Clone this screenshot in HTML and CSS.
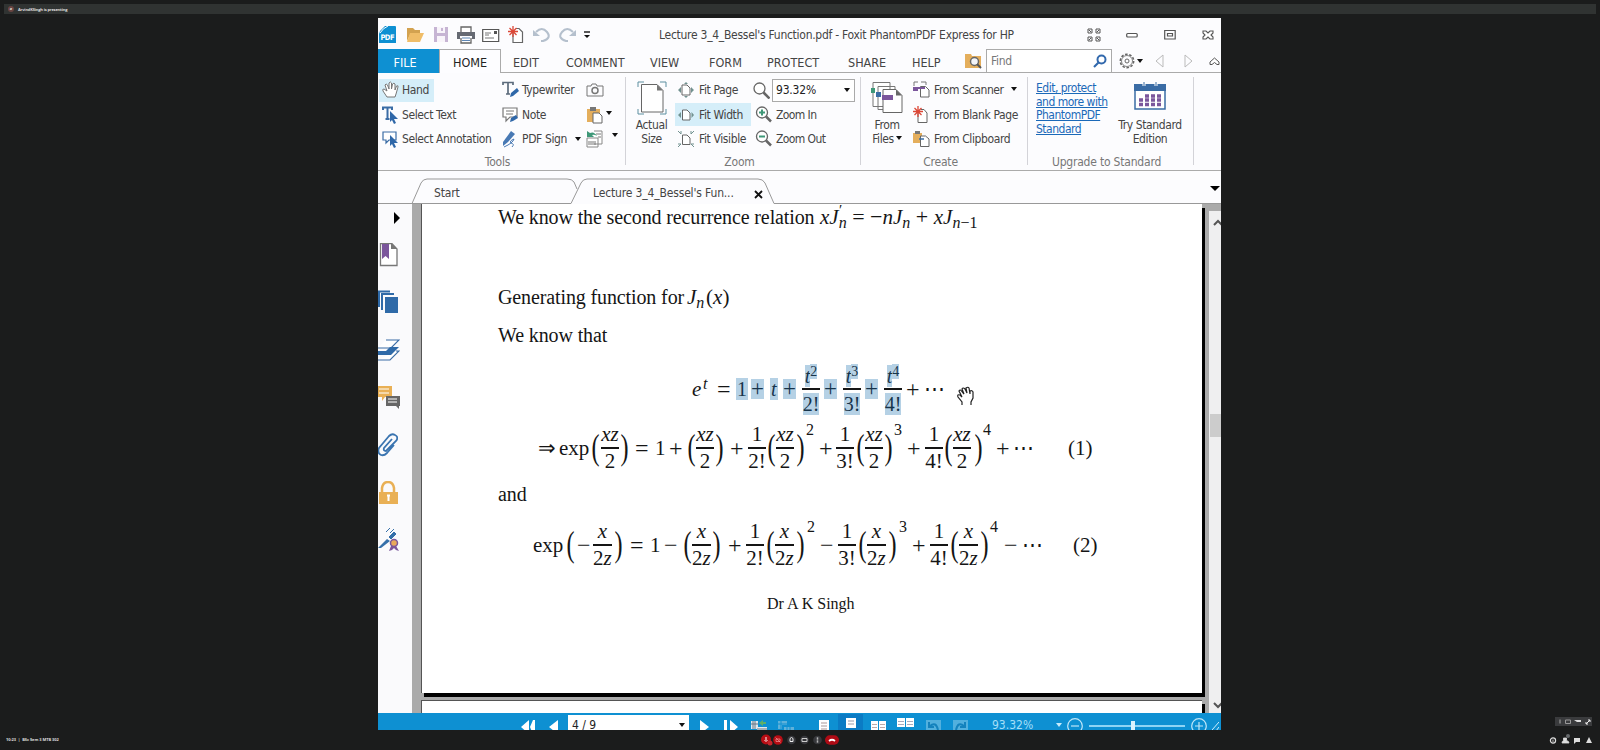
FILE: index.html
```html
<!DOCTYPE html>
<html lang="en">
<head>
<meta charset="utf-8">
<title>Lecture 3_4_Bessel's Function.pdf</title>
<link rel="stylesheet" href="styles.css">
</head>
<body>
<div class="call">
<header class="presenting"><i class="avatar">a</i><span>ArvindKSingh is presenting</span></header>

<main class="window">
  <div class="titlebar">
    <svg width="18" height="18" viewBox="0 0 18 18"><path d="M1 5 6 0h10q1 0 1 1v16H0V8z" fill="#0e90d2"/><path d="M1 7q3-5 8-7" stroke="#fff" fill="none"/><text x="1.5" y="14" font-size="7.5" font-weight="bold" fill="#fff" textLength="14">PDF</text></svg>
    <svg width="18" height="18" viewBox="0 0 18 18"><path d="M1 2h6l2 2h5v3H5L1 15z" fill="#d3a250"/><path d="M4 7h14l-4 9H1z" fill="#f0bd68"/></svg>
    <svg width="18" height="18" viewBox="0 0 18 18"><path d="M1 1h14v15H1z" fill="#c6b4d3"/><path d="M4 1h8v6H4zM4 10h8v6H4z" fill="#f8f4fa"/><path d="M9 2v3" stroke="#c6b4d3" stroke-width="2"/></svg>
    <svg width="18" height="18" viewBox="0 0 18 18"><path d="M4 6V1h10v5M4 12v5h10v-5" fill="#fff" stroke="#666" stroke-width="1.3"/><path d="M0 6h18v7h-3v-3H3v3H0z" fill="#666a73"/><path d="M5 12h8M5 14.500h8" stroke="#5d86b5"/></svg>
    <svg width="18" height="18" viewBox="0 0 18 18"><path d="M.7 3.500h16v12H.7z" fill="#fff" stroke="#555" stroke-width="1.2"/><path d="M3 7h6M3 9h4M3 12h9" stroke="#777"/><path d="M12 5h3v3h-3z" fill="#555"/></svg>
    <svg width="18" height="18" viewBox="0 0 18 18"><path d="M5 5v11.500h9.500V6L11 2.500H8" fill="#fff" stroke="#666" stroke-width="1.2"/><path d="M5 0v11M0 5.500h10M1.500 2l7 7M8.500 2l-7 7" stroke="#dc4837" stroke-width="1.3"/></svg>
    <svg width="18" height="18" viewBox="0 0 18 18"><path d="M3 6q6-6 11 0t-4 9H8" stroke="#b5c0cd" stroke-width="2" fill="none"/><path d="M0 4v6h7z" fill="#b5c0cd"/></svg>
    <svg width="18" height="18" viewBox="0 0 18 18"><path d="M14 6Q8 0 3 6t4 9h2" stroke="#b5c0cd" stroke-width="2" fill="none"/><path d="M17 4v6h-7z" fill="#b5c0cd"/></svg>
    <svg width="8" height="8" viewBox="0 0 8 8"><path d="M1 1h6" stroke="#222" stroke-width="1.500"/><path d="M1 4h6L4 7z" fill="#111"/></svg>
    <span class="title">Lecture 3_4_Bessel's Function.pdf - Foxit PhantomPDF Express for HP</span>
    <svg width="14" height="14" viewBox="0 0 14 14" fill="none" stroke="#555"><path d="M1 1h4v4H1zM9 1h4v4H9zM1 9h4v4H1zM9 9h4v4H9zM2 2l2 2M12 2l-2 2M2 12l2-2M12 12l-2-2"/></svg>
    <svg width="12" height="14" viewBox="0 0 12 14"><rect x=".7" y="5.500" width="10.500" height="3.500" rx="1" fill="#fff" stroke="#555" stroke-width="1.2"/></svg>
    <svg width="12" height="14" viewBox="0 0 12 14" fill="none" stroke="#555" stroke-width="1.2"><path d="M.7 2.500h10.500v8.500H.7zM3.500 5.500h5v2.500h-5z"/></svg>
    <svg width="12" height="14" viewBox="0 0 12 14"><path d="M1 3h3l2 2 2-2h3v2L9 7l2 2v2H8L6 9l-2 2H1V9l2-2-2-2z" fill="#fff" stroke="#555" stroke-width="1.1"/></svg>
  </div>

  <nav class="tabs">
    <span class="file">FILE</span><span class="home">HOME</span><span>EDIT</span><span>COMMENT</span><span>VIEW</span><span>FORM</span><span>PROTECT</span><span>SHARE</span><span>HELP</span>
    <svg width="18" height="18" viewBox="0 0 18 18"><path d="M0 2h6l1 2h9v12H0z" fill="#e4ae5c"/><circle cx="9.500" cy="9.500" r="4" fill="#f3f4f8" stroke="#666" stroke-width="1.500"/><path d="m12 12 4 4" stroke="#555" stroke-width="2"/></svg>
    <div class="find"><span>Find</span><svg width="14" height="14" viewBox="0 0 14 14"><circle cx="8.500" cy="5.500" r="4" fill="none" stroke="#3269ad" stroke-width="2"/><path d="m6 8-5 5" stroke="#3269ad" stroke-width="2.200"/></svg></div>
    <svg width="16" height="16" viewBox="0 0 16 16" fill="none" stroke="#666"><circle cx="8" cy="8" r="6.700" stroke-width="1.500" stroke-dasharray="2.600 1.600"/><circle cx="8" cy="8" r="5.500" stroke-width=".8"/><circle cx="8" cy="8" r="2"/></svg>
    <i class="arrow"></i>
    <svg width="9" height="14" viewBox="0 0 9 14"><path d="M8 1v12L1 7z" fill="none" stroke="#bbb"/></svg>
    <svg width="9" height="14" viewBox="0 0 9 14"><path d="M1 1v12l7-6z" fill="none" stroke="#bbb"/></svg>
    <svg width="11" height="10" viewBox="0 0 11 10"><path d="m1 6 4.500-4L10 6v2.500H8L5.500 6.500 3 8.500H1z" fill="#fff" stroke="#555"/></svg>
  </nav>

  <section class="ribbon">
    <div class="group tools">
      <div class="items">
        <div class="cmd on"><svg width="18" height="18" viewBox="0 0 18 18"><path d="M5 16 1 10q-1-2 1-2l3 2L3 4q1-2 2.500 0L7 8V2q1.500-2 2.500 0v6l1-5q1.500-1.500 2.500 0v6l1.500-4q2-1 1.500 1l-2 7-1 3z" fill="#fff" stroke="#777"/></svg>Hand</div>
        <div class="cmd"><svg width="18" height="18" viewBox="0 0 18 18"><path d="M1 4V1.500h10V4M6 1v12M4 13h4" fill="none" stroke="#5c6b7c" stroke-width="1.700"/><path d="m8 16 1-4 6-5 2 3-6 5z" fill="#2f67a8"/></svg>Typewriter</div>
        <div class="cmd"><svg width="18" height="18" viewBox="0 0 18 18" fill="none" stroke="#777"><path d="M1 5h4l1-2h4l1 2h6v10H1z"/><circle cx="9" cy="9.500" r="3" stroke-width="1.500"/></svg></div>
        <div class="cmd"><svg width="18" height="18" viewBox="0 0 18 18"><path d="M1 4V1.500h9V4M5.500 1v12M3.500 13h4" fill="none" stroke="#3a6ca5" stroke-width="2"/><path d="m8 5 8 8h-4l2 4-2 1-2-4-2 2z" fill="#2f67a8"/></svg>Select Text</div>
        <div class="cmd"><svg width="18" height="18" viewBox="0 0 18 18"><path d="M1 2h14v9H8l-4 4v-4H1z" fill="#fff" stroke="#777" stroke-width="1.200"/><path d="M4 5h8M4 8h7" stroke="#777"/><path d="m8 16 1-4 5-3 2 3-5 3z" fill="#2f67a8"/></svg>Note</div>
        <div class="cmd"><svg width="18" height="18" viewBox="0 0 18 18"><path d="M1 3h13v13H1z" fill="#e4ae5c"/><path d="M4 1h6v4H4z" fill="#777"/><path d="M7 7h6l3 3v7H7z" fill="#fff" stroke="#666"/></svg><i class="arrow"></i></div>
        <div class="cmd"><svg width="18" height="18" viewBox="0 0 18 18"><path d="M1 2h13v8H7l-3 3v-3H1z" fill="#fff" stroke="#3a6ca5" stroke-width="1.200"/><path d="m8 5 8 8h-4l2 4-2 1-2-4-2 2z" fill="#2f67a8"/></svg>Select Annotation</div>
        <div class="cmd"><svg width="18" height="18" viewBox="0 0 18 18"><path d="m1 12 8-11 4 3-7 8-5 4z" fill="#4879b4"/><path d="M2 17q9-4 10-8-5 2-3 4 4 1 1 4" fill="none" stroke="#4879b4"/></svg>PDF Sign<i class="arrow"></i></div>
        <div class="cmd"><svg width="18" height="18" viewBox="0 0 18 18"><path d="M8 1h8v13H8M1 8h11v9H1z" fill="#fff" stroke="#888"/><path d="M10 4h5M12 7h3M3 15v-4M5 15v-4M7 15v-4M9 15v-4" stroke="#777"/><path d="M1 1v6h7L6 5q2-1 5 1Q8 1 4 3z" fill="#3f9878"/></svg><i class="arrow far"></i></div>
      </div>
      <div class="label">Tools</div>
    </div>
    <div class="group zoomer">
      <div class="big"><svg width="30" height="34" viewBox="0 0 30 34"><path d="M1 6V1h6M23 1h6v5M1 28v5h6M23 33h6v-5" fill="none" stroke="#5d8fa0"/><path d="M4.500 3.500H20l6 6V31H4.500z" fill="#fff" stroke="#666"/><path d="M20 3.500v6h6z" fill="#777"/></svg><span>Actual<br>Size</span></div>
      <div class="items">
        <div class="cmd"><svg width="16" height="16" viewBox="0 0 16 16"><path d="M4 3h5l3 3v7H4z" fill="#fff" stroke="#666"/><path d="M3 5 0 8l3 3zM13 5l3 3-3 3zM6 2l2-2 2 2zM6 14l2 2 2-2z" fill="#71918f"/></svg>Fit Page</div>
        <div class="cmd"><svg width="17" height="17" viewBox="0 0 17 17"><circle cx="6.500" cy="6.500" r="5.500" fill="#fff" stroke="#666" stroke-width="1.300"/><path d="m10.500 10.500 6 6" stroke="#666" stroke-width="2.500"/></svg><div class="select">93.32%<i class="arrow"></i></div></div>
        <div class="cmd on"><svg width="16" height="16" viewBox="0 0 16 16"><path d="M4.500 3H9l3 3v7H4.500z" fill="#fff" stroke="#666"/><path d="M3 5 0 8l3 3zM13.500 5l2.500 3-2.500 3z" fill="#71918f"/></svg>Fit Width</div>
        <div class="cmd"><svg width="17" height="17" viewBox="0 0 17 17"><circle cx="7" cy="6.500" r="5.500" fill="#fff" stroke="#666" stroke-width="1.300"/><path d="m11 10.500 5 5" stroke="#666" stroke-width="2.500"/><path d="M4 6.500h6M7 3.500v6" stroke="#3f9878" stroke-width="2"/></svg>Zoom In</div>
        <div class="cmd"><svg width="16" height="16" viewBox="0 0 16 16"><path d="M4.500 4H9l3 3v6.500H4.500z" fill="#fff" stroke="#666"/><path d="m0 0 3 3V0M16 0l-3 3V0M0 16l3-3H0M16 16l-3-3h3" fill="none" stroke="#71918f"/></svg>Fit Visible</div>
        <div class="cmd"><svg width="17" height="17" viewBox="0 0 17 17"><circle cx="7" cy="6.500" r="5.500" fill="#fff" stroke="#666" stroke-width="1.300"/><path d="m11 10.500 5 5" stroke="#666" stroke-width="2.500"/><path d="M4 6.500h6" stroke="#3f9878" stroke-width="2"/></svg>Zoom Out</div>
      </div>
      <div class="label">Zoom</div>
    </div>
    <div class="group create">
      <div class="big"><svg width="32" height="34" viewBox="0 0 32 34"><path d="M2 1.500h17v24H2zM7 5.500h17v23H7z" fill="#fff" stroke="#777"/><path d="M12 8.500h13l6 6v17H12z" fill="#fff" stroke="#666"/><path d="M25 8.500v6h6z" fill="#666"/><path d="M0 7h4v5H0z" fill="#3f9878"/><path d="M5 11h5v5H5z" fill="#3a6ca5"/><path d="M11 14h11v5H11z" fill="#7b569c"/></svg><span>From<br>Files<i class="arrow"></i></span></div>
      <div class="items">
        <div class="cmd"><svg width="17" height="18" viewBox="0 0 17 18"><path d="M7.500 5.500h5l3.500 3.500v7H7.500z" fill="#fff" stroke="#666"/><path d="M1 5V1h4M8 1h5v3" fill="none" stroke="#777"/><path d="M0 7h12M0 9h5" stroke="#7b569c" stroke-width="2"/></svg>From Scanner<i class="arrow"></i></div>
        <div class="cmd"><svg width="17" height="18" viewBox="0 0 17 18"><path d="M5 5v11.500h9V7l-3-3.500H8" fill="#fff" stroke="#666"/><path d="M5 0v11M0 5.500h10M1.500 2l7 7M8.500 2l-7 7" stroke="#dc4837" stroke-width="1.300"/></svg>From Blank Page</div>
        <div class="cmd"><svg width="17" height="18" viewBox="0 0 17 18"><path d="M0 3h9v10H0z" fill="#e4ae5c"/><path d="M2 1h5v3H2z" fill="#777"/><path d="M7.500 6h5l3.500 3v7.500H7.500z" fill="#fff" stroke="#666"/><path d="M6 9h5" stroke="#3a6ca5" stroke-width="1.500"/></svg>From Clipboard</div>
      </div>
      <div class="label">Create</div>
    </div>
    <div class="group upgrade">
      <a class="offer">Edit, protect<br>and more with<br>PhantomPDF<br>Standard</a>
      <div class="big"><svg width="32" height="34" viewBox="0 0 32 34"><path d="M1 4h30v24H1z" fill="#fff" stroke="#3a6ca5" stroke-width="1.500"/><path d="M0 3h32v7H0z" fill="#3a6ca5"/><path d="M10 0v5M22 0v5" stroke="#fff" stroke-width="3"/><path d="M10 1v4M22 1v4" stroke="#3a6ca5"/><path d="M11 15h17M5 19h23M5 23.500h23" stroke="#7b569c" stroke-width="3.500" stroke-dasharray="4 2"/></svg><span>Try Standard<br>Edition</span></div>
      <div class="label">Upgrade to Standard</div>
    </div>
  </section>

  <div class="doctabs">
    <svg class="outline" width="843" height="33" viewBox="0 0 843 33"><path d="M0 32.500h34L43 12q2-4 6-4h140q5 0 7 3l3 7M34 32.500h159L203 12q2-4 6-4h171q5 0 7 4l9 20.500h447" fill="none" stroke="#999"/></svg>
    <span class="t1">Start</span><span class="t2">Lecture 3_4_Bessel's Fun...</span>
    <svg class="close" width="9" height="9" viewBox="0 0 9 9"><path d="m1 1 7 7M8 1 1 8" stroke="#111" stroke-width="1.800"/></svg>
    <svg class="more" width="10" height="6" viewBox="0 0 10 6"><path d="M0 0h10L5 5z"/></svg>
  </div>

  <div class="body">
    <aside>
      <svg width="7" height="12" viewBox="0 0 7 12"><path d="M1 0v12l6-6z"/></svg>
      <svg width="20" height="24" viewBox="0 0 20 24"><path d="M2.500.700H14L19 6v16.500H2.500z" fill="#fff" stroke="#777" stroke-width="1.300"/><path d="M13 0v6h6z" fill="#777"/><path d="M4 1h7v15l-3.500-3L4 16z" fill="#7b569c"/></svg>
      <svg width="20" height="24" viewBox="0 0 20 24"><path d="M1 17V1.500h11M4 20V4h12" fill="none" stroke="#2f6aa8" stroke-width="2"/><path d="M7 7h13v16H7z" fill="#2f6aa8"/></svg>
      <svg width="22" height="24" viewBox="0 0 22 24"><path d="M8 2h13l-8 8H0M0 22h12l9-9h-3" fill="#fff" stroke="#3a6ca5" stroke-width="1.200"/><path d="M0 13h8l4-4h9l-8 8H0z" fill="#2f6aa8"/></svg>
      <svg width="22" height="24" viewBox="0 0 22 24"><path d="M0 1h14v11H7l-3 4v-4H0z" fill="#e9b055"/><path d="M1 4h10M1 8h10" stroke="#fff"/><path d="M8 11h14v10h-1v3l-3-3H8z" fill="#666"/><path d="M10 14h9M10 17h9" stroke="#fff"/></svg>
      <svg width="20" height="24" viewBox="0 0 20 24"><path d="M14 6 6 15q-1 3 2 3l10-10q3-4-1-6-3-2-6 1L1 15q-2 5 2 7 3 1 6-2l7-8" fill="none" stroke="#3a74b0" stroke-width="1.800"/></svg>
      <svg width="20" height="24" viewBox="0 0 20 24"><path d="M4 12V7q1-6 6-6t6 6v5" fill="none" stroke="#e9b055" stroke-width="2.500"/><path d="M1 11h19v12H1z" fill="#e9b055"/><path d="M10.500 14v6M9 14.500h3" stroke="#fff" stroke-width="2"/></svg>
      <svg width="22" height="24" viewBox="0 0 22 24"><path d="m0 20 9-9 3 2-9 7z" fill="#3570aa"/><path d="m11 9 5-5 2 2-5 5zM8 4l4-4M12 5l4-4" fill="#3570aa" stroke="#3570aa"/><path d="m11 23 2-5h5l3 5-3-1-2-2-2 2z" fill="#7b569c"/><circle cx="16" cy="15" r="3.500" fill="#e9a95a" stroke="#7b569c" stroke-width="1.500"/></svg>
    </aside>
    <div class="viewer">
      <article class="page">
        <p class="recur">We know the second recurrence relation</p><p class="rel"><i>xJ</i><span class="prime">′</span><sub class="un"><i>n</i></sub><b> = −</b><i>nJ</i><sub><i>n</i></sub><b> + </b><i>xJ</i><sub><i>n</i>−1</sub></p>
        <p class="gen">Generating function for</p><p class="jn"><i>J</i><sub><i>n</i></sub>&#8202;(<i>x</i>)</p>
        <p class="know">We know that</p>
        <div class="eq e0"><i>e</i><i class="sup">t</i><b>=</b><span class="hl">1</span><b class="hl">+</b><i class="hl">t</i><b class="hl">+</b><span class="fr"><span><i class="hl">t</i><sup class="hl">2</sup></span><span><u class="hl">2!</u></span></span><b class="hl">+</b><span class="fr"><span><i class="hl">t</i><sup class="hl">3</sup></span><span><u class="hl">3!</u></span></span><b class="hl">+</b><span class="fr"><span><i class="hl">t</i><sup class="hl">4</sup></span><span><u class="hl">4!</u></span></span><b>+</b><span>⋯</span><svg width="18" height="20" viewBox="0 0 18 20"><path d="M5 19v-3L1 11q-1-3 2-2l2 2-3-6q1-2 2.500 0L7 8 5 3q1-2 3 0l2 4-1-5q2-1.500 3 0l1 6V5q2-1 3 1v6l-2 4v3" fill="#fff" stroke="#222" stroke-width="1.200"/></svg></div>
        <div class="eq e1"><span>⇒</span><span>exp</span><em>(</em><span class="fr"><i>xz</i><span>2</span></span><em>)</em><b>=</b><span>1</span><b>+</b><em>(</em><span class="fr"><i>xz</i><span>2</span></span><em>)</em><b>+</b><span class="fr"><span>1</span><span>2!</span></span><em>(</em><span class="fr"><i>xz</i><span>2</span></span><em>)</em><span class="sup">2</span><b>+</b><span class="fr"><span>1</span><span>3!</span></span><em>(</em><span class="fr"><i>xz</i><span>2</span></span><em>)</em><span class="sup">3</span><b>+</b><span class="fr"><span>1</span><span>4!</span></span><em>(</em><span class="fr"><i>xz</i><span>2</span></span><em>)</em><span class="sup">4</span><b>+</b><span>⋯</span><span>(1)</span></div>
        <p class="and">and</p>
        <div class="eq e2"><span>exp</span><em>(</em><b>−</b><span class="fr"><i>x</i><span>2<i>z</i></span></span><em>)</em><b>=</b><span>1</span><b>−</b><em>(</em><span class="fr"><i>x</i><span>2<i>z</i></span></span><em>)</em><b>+</b><span class="fr"><span>1</span><span>2!</span></span><em>(</em><span class="fr"><i>x</i><span>2<i>z</i></span></span><em>)</em><span class="sup">2</span><b>−</b><span class="fr"><span>1</span><span>3!</span></span><em>(</em><span class="fr"><i>x</i><span>2<i>z</i></span></span><em>)</em><span class="sup">3</span><b>+</b><span class="fr"><span>1</span><span>4!</span></span><em>(</em><span class="fr"><i>x</i><span>2<i>z</i></span></span><em>)</em><span class="sup">4</span><b>−</b><span>⋯</span><span>(2)</span></div>
        <p class="author">Dr A K Singh</p>
      </article>
      <div class="page next"></div>
    </div>
    <div class="scroll">
      <svg width="10" height="7" viewBox="0 0 10 7"><path d="m1 6 4-4 4 4" fill="none" stroke="#555" stroke-width="2"/></svg>
      <i class="thumb"></i>
      <svg width="10" height="7" viewBox="0 0 10 7"><path d="m1 1 4 4 4-4" fill="none" stroke="#555" stroke-width="2"/></svg>
    </div>
  </div>

  <footer class="status">
    <svg width="15" height="14" viewBox="0 0 15 14"><path d="M8 0v14L0 7zM12 0h2v14h-2l-3-7z" fill="#fff"/></svg>
    <svg width="9" height="14" viewBox="0 0 9 14"><path d="M9 0v14L0 7z" fill="#fff"/></svg>
    <div class="pageno">4 / 9<i class="arrow"></i></div>
    <svg width="9" height="14" viewBox="0 0 9 14"><path d="M0 0v14l9-7z" fill="#fff"/></svg>
    <svg width="15" height="14" viewBox="0 0 15 14"><path d="M6 0v14l8-7zM0 0h3v14H0z" fill="#fff"/></svg>
    <svg width="16" height="14" viewBox="0 0 16 14"><path d="M0 1h7v8H0zM6 7h10v7H6z" fill="#dfe9ee"/><path d="m8 3 4-3v2h3v2h-3v2z" fill="#5daf69"/><path d="M2 1v8M4 1v8M0 4h7M6 9h10" stroke="#678"/></svg>
    <svg width="16" height="14" viewBox="0 0 16 14"><path d="M0 1h9v4H4v4H0zM6 7h10v7H6z" fill="#5eb1da"/><path d="M3 1v8M0 4h9M9 7v7M12 7v7" stroke="#0e90d2"/></svg>
    <svg width="10" height="14" viewBox="0 0 10 14"><path d="M0 0h10v14H0z" fill="#fff"/><path d="M2 3h6M2 6h6M2 9h6" stroke="#a99"/></svg>
    <div class="active"><svg width="10" height="11" viewBox="0 0 10 11"><path d="M0 0h10v10H0z" fill="#fff"/><path d="M2 3h6M2 6h6" stroke="#99a"/></svg></div>
    <svg width="15" height="14" viewBox="0 0 15 14"><path d="M0 1h7v13H0zM8 1h7v13H8z" fill="#fff"/><path d="M1 4.500h5M1 7.500h5M9 4.500h5M9 7.500h5" stroke="#baa"/></svg>
    <svg class="up" width="17" height="11" viewBox="0 0 17 11"><path d="M0 1h8v9H0zM9 1h8v9H9z" fill="#fff"/><path d="M1 4.500h6M1 7.500h6M10 4.500h6M10 7.500h6" stroke="#aab"/></svg>
    <svg width="15" height="14" viewBox="0 0 15 14"><path d="M0 0h15v14H0z" fill="#52b0de"/><path d="M3 2v5h5M4 6q6-5 8 4" fill="none" stroke="#1482bd" stroke-width="2"/></svg>
    <svg width="15" height="14" viewBox="0 0 15 14"><path d="M0 0h15v14H0z" fill="#52b0de"/><path d="M12 2v5H7M11 6Q5 1 3 10" fill="none" stroke="#1482bd" stroke-width="2"/></svg>
    <span class="pct">93.32%</span>
    <i class="arrow lite"></i>
    <svg width="16" height="16" viewBox="0 0 16 16" fill="none" stroke="#bfe6f8" stroke-width="1.200"><circle cx="8" cy="8" r="7.300"/><path d="M4 8h8"/></svg>
    <div class="slider"><i></i></div>
    <svg width="16" height="16" viewBox="0 0 16 16" fill="none" stroke="#bfe6f8" stroke-width="1.200"><circle cx="8" cy="8" r="7.300"/><path d="M4 8h8M8 4v8"/></svg>
    <svg width="7" height="12" viewBox="0 0 7 12"><path d="m0 10 7-8M4 11l3-4" stroke="#cdeefc"/></svg>
  </footer>
</main>

<footer class="callbar">
  <span class="meeting">10:23 &nbsp;|&nbsp; BSc Sem 3 MTB 302</span>
  <div class="buttons">
    <svg width="14" height="12" viewBox="0 0 14 12"><circle cx="6" cy="5.500" r="5" fill="#b80d14"/><circle cx="10" cy="9" r="2.500" fill="#c4242a"/><path d="M6 3v3M4.500 6q1.500 3 3 0" stroke="#fff" fill="none"/></svg>
    <svg width="10" height="12" viewBox="0 0 10 12"><circle cx="5" cy="6" r="4.800" fill="#b80d14"/><path d="M3 5h4v2.500H3zM2.500 3.500l5 5" stroke="#e99" stroke-width=".7" fill="none"/></svg>
    <svg width="9" height="12" viewBox="0 0 9 12"><circle cx="4.500" cy="6" r="4.300" fill="#37383c"/><path d="M3 4.500v3h3v-3L4.500 3.500z" fill="none" stroke="#eee"/></svg>
    <svg width="9" height="12" viewBox="0 0 9 12"><circle cx="4.500" cy="6" r="4.300" fill="#37383c"/><path d="M2 4.500h5v3H2z" fill="none" stroke="#ccc"/></svg>
    <svg width="9" height="12" viewBox="0 0 9 12"><circle cx="4.500" cy="6" r="4.300" fill="#37383c"/><path d="M4.500 3.500v5" stroke="#ddd" stroke-dasharray="1.200 .7" stroke-width="1.500"/></svg>
    <svg width="14" height="12" viewBox="0 0 14 12"><rect y="1.300" width="14" height="9.400" rx="4.700" fill="#ae0b15"/><path d="M4 7q3-2.500 6 0" fill="none" stroke="#fff" stroke-width="1.700"/></svg>
  </div>
  <div class="side">
    <div class="tile"><svg width="37" height="9" viewBox="0 0 37 9"><path d="M5 2.500v4" stroke="#aaa"/><path d="M10.500 3h5v3.500h-5z" fill="none" stroke="#999"/><path d="M19 3h7v2h-4z" fill="#ddd"/><path d="m31 7 4-4M33 3h2v2M31 5v2h2" stroke="#eee" fill="none"/></svg></div>
    <svg width="44" height="12" viewBox="0 0 44 12"><circle cx="4" cy="6.500" r="2.600" fill="none" stroke="#ddd" stroke-width="1.200"/><path d="M4 5.500v2.500M13 9q0-2 1.500-2.500V4h3v2.500Q20 7 20 9z" stroke="#ddd" stroke-width=".8" fill="#ddd"/><circle cx="19" cy="2" r="2" fill="#66696c"/><path d="M25 4h6v4h-4l-2 2zM40 3l3 6h-6z" fill="#ddd"/></svg>
  </div>
</footer>
</div>
</body>
</html>
```
FILE: styles.css
```css
* { box-sizing: border-box; }
body { margin: 0; background: #1b1c1c; font-family: "DejaVu Sans Condensed", "DejaVu Sans", sans-serif; font-stretch: condensed; font-size: 12px; color: #444; }
svg { display: block; flex: none; }
p { margin: 0; }
.call { height: 750px; display: flex; flex-direction: column; align-items: center; overflow: hidden; }
.presenting { width: 1592px; height: 10px; margin: 4px 0 4px 4px; align-self: flex-start; background: #303332; display: flex; align-items: center; gap: 4px; padding-left: 4px; font: bold 4px "Open Sans", sans-serif; color: #ddd; }
.presenting span { letter-spacing: -.17px; }
.avatar { width: 6px; height: 6px; border-radius: 50%; background: #6a4541; text-align: center; line-height: 5px; }
.window { width: 843px; height: 712px; margin-left: -1px; flex: none; background: #fcfcfe; display: flex; flex-direction: column; overflow: hidden; }

.titlebar { height: 31px; flex: none; padding: 2px 0 0 1px; display: grid; align-items: center; grid-template-columns: 27px 27px 24px 25px 26px 25px 26px 24px 76px 428px 39px 38px 38px 16px; }
.title { white-space: nowrap; letter-spacing: -.27px; }
.tabs { height: 24px; flex: none; border-bottom: 1px solid #aaa; display: grid; align-items: center; font-size: 12.5px; white-space: nowrap; grid-template-columns: 61px 74px 53px 84px 59px 58px 81px 64px 53px 21px 133px 18px 18px 29px 25px 12px; }
.tabs > span { padding-top: 2px; }
.file { background: #0e90d2; color: #fff; height: 24px; line-height: 23px; text-align: center; padding-right: 7px; }
.tabs .home { width: 62px; height: 24px; line-height: 24px; text-align: center; border: 1px solid #aaa; border-bottom: 0; background: #fdfdff; color: #222; padding-top: 1px; }
.find { width: 126px; height: 24px; border: 1px solid #aaa; background: #fff; display: flex; align-items: center; justify-content: space-between; padding: 0 4px; font-size: 12px; letter-spacing: -.3px; color: #777; }
.arrow { display: inline-block; flex: none; width: 6px; border: 3px solid transparent; border-top: 4px solid #111; border-bottom: 0; }

.ribbon { height: 98px; flex: none; border-bottom: 1px solid #aaa; display: flex; padding-top: 4px; letter-spacing: -.38px; }
.group { height: 88px; border-right: 1px solid #d3d3d8; display: grid; grid-template-rows: 74px 14px; white-space: nowrap; }
.label { grid-column: 1 / -1; text-align: center; color: #777; line-height: 14px; letter-spacing: -.2px; padding-top: 4px; padding-right: 8px; }
.items { display: grid; grid-template-rows: repeat(3, 24.4px); align-items: center; padding-top: 1px; }
.cmd { height: 23px; display: flex; align-items: center; gap: 3px; }
.on { background: #d5eef9; }
.tools { width: 248px; }
.tools .items { grid-template-columns: 120px 84px 40px; padding-left: 1px; }
.tools .cmd { padding-left: 3px; gap: 2px; }
.tools .on { width: 55px; }
.tools .cmd .arrow { margin-left: 6px; }
.tools .cmd:nth-child(3n) .arrow { margin-left: 0; margin-top: -4px; }
.tools .cmd .far.arrow { margin-left: 6px !important; margin-top: -7px; }
.zoomer { width: 235px; grid-template-columns: 49px 186px; }
.zoomer .items { grid-template-columns: 78px 108px; }
.zoomer .cmd { padding-left: 3px; gap: 5px; }
.zoomer .on { width: 76px; }
.zoomer .cmd:nth-child(even) { gap: 4px; padding-left: 2px; letter-spacing: -.6px; }
.zoomer .cmd:nth-child(2) { gap: 2px; padding-left: 0; letter-spacing: -.2px; }
.select { width: 83px; height: 23px; border: 1px solid #aaa; background: #fff; color: #222; display: flex; align-items: center; justify-content: space-between; padding: 0 4px 0 3px; }
.big { display: flex; flex-direction: column; align-items: center; text-align: center; line-height: 13.7px; padding: 4px 0 0 2px; gap: 4px; }
.big .arrow { margin: 0 0 3px 2px; }
.create { width: 167px; grid-template-columns: 52px 115px; }
.create .big { padding-left: 0; }
.create .cmd { gap: 4px; }
.create .cmd .arrow { margin-left: 3px; margin-bottom: 3px; }
.upgrade { width: 166px; grid-template-columns: 77px 88px; }
.offer { color: #1b69b8; text-decoration: underline; line-height: 13.7px; padding: 5px 0 0 8px; letter-spacing: -.5px; }

.doctabs { height: 33px; flex: none; display: flex; position: relative; padding-top: 16px; line-height: 13px; white-space: nowrap; letter-spacing: -.15px; }
.outline { position: absolute; left: 0; top: 0; }
.t1 { margin-left: 56px; width: 159px; }
.t2 { width: 161px; }
.close { margin-top: 3px; }
.more { margin: -1px 0 0 447px; }

.body { flex: 1; min-height: 0; display: flex; overflow: hidden; background: #aaa; }
aside { width: 34px; flex: none; background: #fafafc; display: grid; grid-template-rows: 27px 47px 48px 47px 48px 48px 47px 48px; align-items: center; }
aside svg:first-child { margin: 0 0 0 15px; }
.viewer { width: 797px; flex: none; padding-left: 9px; display: flex; flex-direction: column; gap: 7px; }
.page { width: 781px; height: 489px; flex: none; background: #fff; border-left: 1px solid #555; box-shadow: 3px 4px 0 #000; font-family: "Liberation Serif", serif; font-size: 20px; color: #151515; display: grid; grid-template-columns: 322px 1fr; grid-template-rows: 52px 52px 45px 63px 58px 43px 56px 60px; padding-left: 76px; white-space: nowrap; align-content: start; line-height: 24px; }
.next { border-top: 1px solid #555; height: 60px; }
.page b { font-weight: normal; font-size: 24px; line-height: 20px; }
.page p { letter-spacing: -.12px; }
.page .rel, .page .jn { letter-spacing: 0; }
.rel { position: relative; }
.rel b { font-size: 22px; }
.rel i { font-size: 21px; }
.page sub { font-size: 16px; vertical-align: -4px; line-height: 0; }
.page sub i { font-size: 16px; }
.prime { position: absolute; left: 19px; top: -6px; font-size: 15px; }
.recur, .rel { padding-top: 1px; }
.gen, .jn { padding-top: 29px; }
.jn { margin-left: -133px; font-size: 21px; }
.know { grid-column: 1 / -1; padding-top: 15px; }
.and { grid-column: 1 / -1; padding-top: 8px; }
.author { grid-column: 1 / -1; font-size: 16px; padding: 19px 0 0 269px; letter-spacing: 0 !important; }
.eq { grid-column: 1 / -1; display: grid; align-items: center; justify-items: start; font-size: 21px; }
.eq > * { line-height: 22px; }
.eq .sup { font-size: 16px; }
.e0 { margin-left: 194px; padding-top: 9px; grid-template-columns: 11px 14px 19px 15px 19px 13px 19px 22px 19px 22px 19px 22px 18px 32px 20px; }
.e0 > .sup { margin-top: -11px; }
.e0 > svg { margin: 14px 0 0 1px; }
.e1 { margin-left: 40px; padding-top: 6px; grid-template-columns: 21px 33px 9px 20px 14px 20px 14px 19px 8px 20px 14px 18px 20px 8px 21px 9px 13px 17px 21px 8px 20px 9px 13px 18px 20px 8px 22px 8px 13px 17px 55px 30px; }
.e2 { margin-left: 35px; grid-template-columns: 34px 10px 16px 22px 15px 20px 14px 20px 8px 21px 15px 18px 21px 8px 22px 10px 13px 18px 21px 8px 22px 10px 13px 18px 21px 8px 22px 9px 14px 18px 51px 30px; }
.e1 > .sup, .e2 > .sup { margin-top: -36px; }
.eq em { font-style: normal; transform: scale(1.15, 1.75) translateY(-1px); }
.fr { display: flex; flex-direction: column; align-items: center; min-width: 18px; }
.fr > :first-child { border-bottom: 2px solid #151515; align-self: stretch; text-align: center; height: 24px; line-height: 18px; }
.fr > :last-child { height: 22px; line-height: 24px; }
.e0 .fr > :first-child { height: 28px; line-height: 23px; }
.e0 .fr > :last-child { height: 26px; line-height: 28px; }
.hl { background: #b5d1e5; color: #17344b; text-decoration: none; }
.e0 .hl { font-size: 20px; }
.eq > .hl { padding: 0 1px; }
.eq > b.hl { font-size: 23px; padding: 0; }
.e0 .fr .hl { line-height: 20px; }
.e0 .fr sup { font-size: 14px; line-height: 0; vertical-align: 7px; }
.scroll { flex: none; width: 12px; margin-top: 7px; background: #efeff0; display: flex; flex-direction: column; padding: 8px 0 4px 4px; }
.thumb { width: 12px; height: 23px; margin: 188px 0 auto -3px; background: #ccc; }

.status { height: 17px; flex: none; background: #0e90d2; overflow: hidden; display: grid; align-items: start; padding: 6px 0 0 143px; grid-template-columns: 28px 19px 132px 24px 27px 27px 41px 19px 33px 26px 29px 27px 39px 64px 11px 22px 102px 21px 7px; }
.status > * { margin-top: 1px; }
.pageno { width: 121px; height: 22px; margin-top: -4px !important; background: #fff; color: #222; display: flex; align-items: center; justify-content: space-between; padding: 0 4px 2px; }
.active { width: 25px; height: 17px; margin-top: -5px !important; background: #0b7bc4; padding: 4px 0 0 8px; }
.up { margin-top: -2px !important; }
.pct { color: #a5dff8; font-size: 12px; line-height: 12px; margin-top: 0 !important; }
.lite { width: 6px; border-top-color: #c5ebfb; margin-top: 4px !important; }
.status > svg[width="16"][height="16"] { margin-top: -1px; }
.slider { width: 96px; height: 2px; background: #8ed4f4; margin-top: 6px !important; }
.slider i { display: block; width: 4px; height: 10px; margin-left: 42px; background: #d8f3fe; transform: translateY(-4px); }

.callbar { width: 1600px; height: 20px; flex: none; position: relative; display: flex; justify-content: center; color: #ddd; font: bold 4px "Open Sans", sans-serif; }
.meeting { position: absolute; left: 6px; top: 7px; letter-spacing: -.05px; white-space: pre; }
.buttons { display: flex; gap: 4px; padding-top: 4px; margin-left: -2px; }
.buttons svg:first-child { margin-right: -5px; }
.buttons svg:last-child { margin-left: -1px; }
.side { position: absolute; right: 7px; bottom: 4px; }
.tile { width: 37px; height: 9px; background: #3a3b3d; margin: 0 0 8px 6px; }
```
